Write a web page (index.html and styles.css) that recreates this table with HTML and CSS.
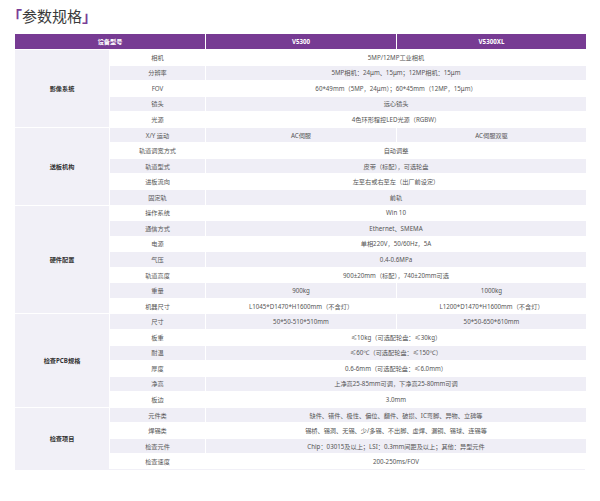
FILE: index.html
```html
<!DOCTYPE html>
<html lang="zh">
<head>
<meta charset="utf-8">
<title>参数规格</title>
<link rel="stylesheet" href="styles.css">
</head>
<body>
<h1 class="title"><span class="br">「</span>参数规格<span class="br">」</span></h1>
<div class="spec">
  <div class="cell hd hd-model">设备型号</div>
  <div class="cell hd">V5300</div>
  <div class="cell hd">V5300XL</div>

  <div class="cell grp span5">影像系统</div>
  <div class="row"><div class="cell lbl">相机</div><div class="cell val full">5MP/12MP工业相机</div></div>
  <div class="row alt"><div class="cell lbl">分辨率</div><div class="cell val full">5MP相机：24μm、15μm；12MP相机：15μm</div></div>
  <div class="row"><div class="cell lbl">FOV</div><div class="cell val full">60*49mm（5MP，24μm）；60*45mm（12MP，15μm）</div></div>
  <div class="row alt"><div class="cell lbl">镜头</div><div class="cell val full">远心镜头</div></div>
  <div class="row"><div class="cell lbl">光源</div><div class="cell val full">4色环形程控LED光源（RGBW）</div></div>

  <div class="cell grp span5">送板机构</div>
  <div class="row alt"><div class="cell lbl">X/Y 运动</div><div class="cell val a">AC伺服</div><div class="cell val b">AC伺服双驱</div></div>
  <div class="row"><div class="cell lbl">轨道调宽方式</div><div class="cell val full">自动调整</div></div>
  <div class="row alt"><div class="cell lbl">轨道型式</div><div class="cell val full">皮带（标配），可选轮盘</div></div>
  <div class="row"><div class="cell lbl">进板流向</div><div class="cell val full">左至右或右至左（出厂前设定）</div></div>
  <div class="row alt"><div class="cell lbl">固定轨</div><div class="cell val full">前轨</div></div>

  <div class="cell grp span7">硬件配置</div>
  <div class="row"><div class="cell lbl">操作系统</div><div class="cell val full">Win 10</div></div>
  <div class="row alt"><div class="cell lbl">通信方式</div><div class="cell val full">Ethernet、SMEMA</div></div>
  <div class="row"><div class="cell lbl">电源</div><div class="cell val full">单相220V，50/60Hz，5A</div></div>
  <div class="row alt"><div class="cell lbl">气压</div><div class="cell val full">0.4-0.6MPa</div></div>
  <div class="row"><div class="cell lbl">轨道高度</div><div class="cell val full">900±20mm（标配），740±20mm可选</div></div>
  <div class="row alt"><div class="cell lbl">重量</div><div class="cell val a">900kg</div><div class="cell val b">1000kg</div></div>
  <div class="row"><div class="cell lbl">机器尺寸</div><div class="cell val a">L1045*D1470*H1600mm（不含灯）</div><div class="cell val b">L1200*D1470*H1600mm（不含灯）</div></div>

  <div class="cell grp span6">检查PCB规格</div>
  <div class="row alt"><div class="cell lbl">尺寸</div><div class="cell val a">50*50-510*510mm</div><div class="cell val b">50*50-650*610mm</div></div>
  <div class="row"><div class="cell lbl">板重</div><div class="cell val full">≤10kg（可选配轮盘：≤30kg）</div></div>
  <div class="row alt"><div class="cell lbl">耐温</div><div class="cell val full">≤60℃（可选配轮盘：≤150℃）</div></div>
  <div class="row"><div class="cell lbl">厚度</div><div class="cell val full">0.6-6mm（可选配轮盘：≤6.0mm）</div></div>
  <div class="row alt"><div class="cell lbl">净高</div><div class="cell val full">上净高25-85mm可调，下净高25-80mm可调</div></div>
  <div class="row"><div class="cell lbl">板边</div><div class="cell val full">3.0mm</div></div>

  <div class="cell grp span4">检查项目</div>
  <div class="row alt"><div class="cell lbl">元件类</div><div class="cell val full">缺件、错件、极性、偏位、翻件、破损、IC弯脚、异物、立碑等</div></div>
  <div class="row"><div class="cell lbl">焊锡类</div><div class="cell val full">锡桥、锡洞、无锡、少/多锡、不出脚、虚焊、漏铜、锡球、连锡等</div></div>
  <div class="row alt"><div class="cell lbl">检查元件</div><div class="cell val full">Chip：03015及以上；LSI：0.3mm间距及以上；其他：异型元件</div></div>
  <div class="row"><div class="cell lbl">检查速度</div><div class="cell val full">200-250ms/FOV</div></div>
</div>
</body>
</html>
```

FILE: styles.css
```css
html, body {
  margin: 0;
  padding: 0;
  background: #ffffff;
}

body {
  font-family: "Noto Sans", "Noto Sans CJK SC", sans-serif;
}

.title {
  margin: 0;
  height: 34px;
  padding-left: 7px;
  box-sizing: border-box;
  font-family: "Noto Sans CJK SC", sans-serif;
  font-size: 15px;
  font-weight: 400;
  line-height: 31px;
  color: #3a3a3a;
}

.br {
  color: #7a3d97;
  font-weight: 700;
}

.spec {
  margin-left: 15px;
  width: 570px;
  height: 436px;
  display: grid;
  grid-template-columns: 94px 95px 190px 189px;
  grid-template-rows: 15px repeat(27, 1fr);
  gap: 1px 1px;
  background: #ffffff;
  border-bottom: 1px solid #f1f0f7;
  box-sizing: border-box;
  font-size: 6.2px;
  color: #555555;
}

.row {
  display: contents;
}

.cell {
  display: flex;
  align-items: center;
  justify-content: center;
  text-align: center;
  white-space: nowrap;
  min-width: 0;
  overflow: hidden;
  background: #ffffff;
}

.hd {
  background: #773b93;
  color: #ffffff;
  font-weight: 700;
}

.hd-model {
  grid-column: 1 / span 2;
}

.grp {
  grid-column: 1;
  background: #f1f0f7;
  color: #333333;
  font-weight: 700;
}

.span4 { grid-row: span 4; }
.span5 { grid-row: span 5; }
.span6 { grid-row: span 6; }
.span7 { grid-row: span 7; }

.lbl { grid-column: 2; }

.val.full { grid-column: 3 / span 2; }
.val.a { grid-column: 3; }
.val.b { grid-column: 4; }

.row.alt > .cell {
  background: #efeef6;
}
```
